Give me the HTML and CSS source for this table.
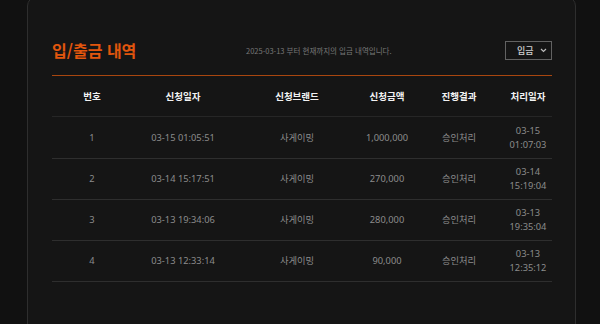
FILE: index.html
```html
<!DOCTYPE html>
<html lang="ko">
<head>
<meta charset="utf-8">
<link rel="stylesheet" href="styles.css">
</head>
<body>
<div class="panel">
  <div class="head">
    <h1 class="title">입/출금 내역</h1>
    <p class="note">2025-03-13 부터 현재까지의 입금 내역입니다.</p>
    <div class="select">
      <span>입금</span>
      <svg class="chev" width="7" height="5" viewBox="0 0 7 5"><path d="M1 1l2.5 2.5L6 1" fill="none" stroke="#bbb" stroke-width="1.2"/></svg>
    </div>
  </div>
  <table class="list">
    <colgroup>
      <col class="c1"><col class="c2"><col class="c3"><col class="c4"><col class="c5"><col class="c6">
    </colgroup>
    <thead>
      <tr><th>번호</th><th>신청일자</th><th>신청브랜드</th><th>신청금액</th><th>진행결과</th><th>처리일자</th></tr>
    </thead>
    <tbody>
      <tr><td>1</td><td>03-15 01:05:51</td><td>사게이밍</td><td>1,000,000</td><td>승인처리</td><td>03-15<br>01:07:03</td></tr>
      <tr><td>2</td><td>03-14 15:17:51</td><td>사게이밍</td><td>270,000</td><td>승인처리</td><td>03-14<br>15:19:04</td></tr>
      <tr><td>3</td><td>03-13 19:34:06</td><td>사게이밍</td><td>280,000</td><td>승인처리</td><td>03-13<br>19:35:04</td></tr>
      <tr><td>4</td><td>03-13 12:33:14</td><td>사게이밍</td><td>90,000</td><td>승인처리</td><td>03-13<br>12:35:12</td></tr>
    </tbody>
  </table>
</div>
</body>
</html>
```
FILE: styles.css
```css
html, body {
  margin: 0;
  padding: 0;
  background: #111111;
  height: 100%;
  overflow: hidden;
}
body {
  font-family: "Noto Sans CJK KR", "Noto Sans", sans-serif;
}
.panel {
  margin: -4px 0 0 27px;
  width: 549px;
  height: 400px;
  box-sizing: border-box;
  background: #151515;
  border: 1px solid #2e2e2e;
  border-radius: 10px;
  padding: 40px 23px 0 24px;
}
.head {
  display: flex;
  align-items: center;
  height: 26px;
  padding-bottom: 12px;
  border-bottom: 1px solid #a8460f;
}
.title {
  margin: 0;
  font-size: 16px;
  font-weight: 700;
  color: #e2560d;
  width: 194px;
  line-height: 26px;
}
.note {
  margin: 0;
  flex: 1;
  font-size: 7.5px;
  color: #777;
  line-height: 26px;
  padding-top: 1px;
}
.select {
  width: 47px;
  height: 19px;
  box-sizing: border-box;
  border: 1px solid #626262;
  display: flex;
  align-items: center;
  justify-content: space-between;
  padding: 0 4px 0 11px;
  font-size: 9px;
  font-weight: 500;
  color: #d0d0d0;
}
.chev {
  display: block;
}
.list {
  width: 500px;
  border-collapse: collapse;
  table-layout: fixed;
}
.c1 { width: 80px; }
.c2 { width: 102px; }
.c3 { width: 126px; }
.c4 { width: 54px; }
.c5 { width: 90px; }
.c6 { width: 48px; }
.list th {
  height: 40px;
  font-size: 9.5px;
  font-weight: 700;
  color: #f2f2f2;
  text-align: center;
  padding: 0;
  border-bottom: 1px solid #262626;
}
.list td {
  height: 40px;
  padding: 0;
  font-family: "Noto Sans", "Noto Sans CJK KR", sans-serif;
  font-size: 9.3px;
  line-height: 14px;
  color: #8c8c8c;
  text-align: center;
  border-bottom: 1px solid #2e2e2e;
  white-space: nowrap;
}
.list tbody tr:first-child td {
  height: 41px;
}
```
